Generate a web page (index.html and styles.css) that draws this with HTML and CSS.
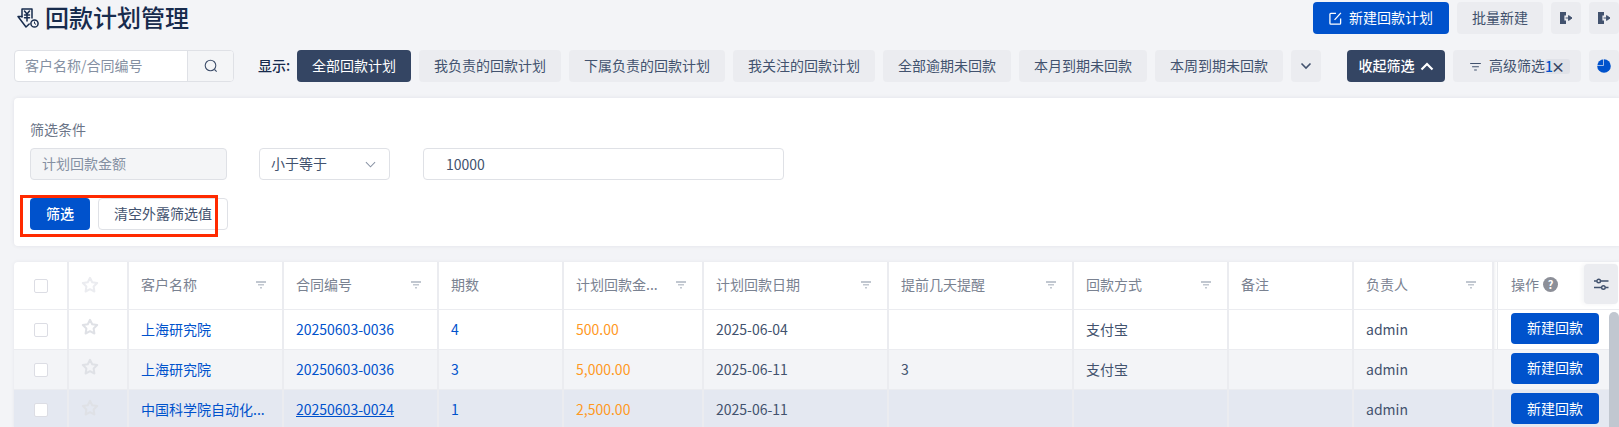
FILE: index.html
```html
<!DOCTYPE html>
<html lang="zh-CN">
<head>
<meta charset="utf-8">
<title>回款计划管理</title>
<link rel="stylesheet" href="styles.css">
</head>
<body>
<div class="page">
  <header class="top">
    <h1 class="title">
      <svg class="title-icon" viewBox="0 0 22 20" fill="none" stroke="#172b4d" stroke-width="1.5" stroke-linejoin="round" stroke-linecap="round"><path d="M5 9V1h10v9"/><path d="M5 8.500H1L9 19l3.200-3"/><path d="M7.500 3 10 6l2.500-3M7.500 7h5M7.500 9.800h5M10 6v7"/><circle cx="17.500" cy="15.500" r="3.600"/><path d="M17.500 14v1.500l1.200.7" stroke-width="1"/></svg>
      <span>回款计划管理</span>
    </h1>
    <div class="top-actions">
      <button class="btn btn-primary btn-new">
        <svg class="ico-edit" viewBox="0 0 14 14" fill="none" stroke="#fff" stroke-width="1.400"><path d="M7.500 1.500H2a1 1 0 0 0-1 1V12a1 1 0 0 0 1 1h9.500a1 1 0 0 0 1-1V7"/><path d="M6 8.500 12.800 1"/></svg>
        新建回款计划
      </button>
      <button class="btn btn-soft">批量新建</button>
      <button class="btn btn-soft btn-icon"><svg class="ico" viewBox="0 0 14 14"><path d="M1 1h6v3.600H5.400v4.800H7V13H1z" fill="#42526e"/><path d="M6.600 7h3V4.600L13 7l-3.400 2.400V7" fill="#42526e" stroke="#42526e"/></svg></button>
      <button class="btn btn-soft btn-icon"><svg class="ico" viewBox="0 0 14 14"><path d="M1 1h6v3.600H5.400v4.800H7V13H1z" fill="#42526e"/><path d="M6.600 7h3V4.600L13 7l-3.400 2.400V7" fill="#42526e" stroke="#42526e"/></svg></button>
    </div>
  </header>

  <div class="toolbar">
    <div class="search">
      <span class="search-text">客户名称/合同编号</span>
      <span class="search-btn"><svg class="ico-search" viewBox="0 0 14 14" fill="none" stroke="#42526e" stroke-width="1.100"><circle cx="6.500" cy="6.500" r="5.300"/><path d="m10.500 10.500 2.200 2.200"/></svg></span>
    </div>
    <span class="show-label">显示:</span>
    <div class="tabs">
      <button class="btn btn-dark">全部回款计划</button>
      <button class="btn btn-soft">我负责的回款计划</button>
      <button class="btn btn-soft">下属负责的回款计划</button>
      <button class="btn btn-soft">我关注的回款计划</button>
      <button class="btn btn-soft">全部逾期未回款</button>
      <button class="btn btn-soft">本月到期未回款</button>
      <button class="btn btn-soft">本周到期未回款</button>
      <button class="btn btn-soft btn-icon"><svg class="ico-chev" viewBox="0 0 12 8" fill="none" stroke="#42526e" stroke-width="1.600"><path d="m1.500 1.500 4.500 4.500 4.500-4.500"/></svg></button>
    </div>
    <div class="tool-right">
      <button class="btn btn-dark btn-collapse">收起筛选<svg class="ico-up" viewBox="0 0 14 9" fill="none" stroke="#fff" stroke-width="2.200"><path d="m1.500 7.500 5.500-5.500 5.500 5.500"/></svg></button>
      <button class="btn btn-soft btn-adv">
        <svg class="ico-filter" viewBox="0 0 12 9" fill="#42526e"><path d="M0 0h12v1.200H0zM2.200 3.600h7.600v1.200H2.200zM4.500 7.200h3v1.200h-3z"/></svg>
        <span>高级筛选</span><span class="badge"><b>1</b><em>×</em></span>
      </button>
      <button class="btn btn-soft btn-icon"><svg class="ico-pie" viewBox="0 0 14 14"><circle cx="7" cy="7" r="6.800" fill="#0052cc"/><path d="M6.500 0v6.500H0" fill="none" stroke="#ebecf0" stroke-width=".7"/></svg></button>
    </div>
  </div>

  <section class="filter-card">
    <div class="filter-label">筛选条件</div>
    <div class="filter-fields">
      <div class="field field-disabled">计划回款金额</div>
      <div class="field field-select">小于等于<svg class="ico-sel" viewBox="0 0 12 7" fill="none" stroke="#8993a4" stroke-width="1.100"><path d="m1 1 5 5 5-5"/></svg></div>
      <div class="field field-value">10000</div>
    </div>
    <div class="filter-actions">
      <button class="btn btn-primary btn-filter">筛选</button>
      <button class="btn btn-outline">清空外露筛选值</button>
      <div class="annotation"></div>
    </div>
  </section>

  <section class="table-wrap">
    <table class="grid">
      <colgroup>
        <col class="c53"><col class="c60"><col class="c155"><col class="c155"><col class="c125"><col class="c140"><col class="c185"><col class="c185"><col class="c155"><col class="c125"><col class="c140"><col class="c127">
      </colgroup>
      <thead>
        <tr>
          <th class="ctr"><span class="check"></span></th>
          <th class="ctr star-cell"><svg class="star star-head" viewBox="0 0 18 17"><path d="m9 1.800 2.200 4.500 5 .7-3.600 3.500.8 5L9 13.200l-4.400 2.300.8-5L1.800 7l5-.7z"/></svg></th>
          <th><div class="th"><span>客户名称</span><i class="fi"></i></div></th>
          <th><div class="th"><span>合同编号</span><i class="fi"></i></div></th>
          <th><div class="th"><span>期数</span></div></th>
          <th><div class="th"><span>计划回款金...</span><i class="fi"></i></div></th>
          <th><div class="th"><span>计划回款日期</span><i class="fi"></i></div></th>
          <th><div class="th"><span>提前几天提醒</span><i class="fi"></i></div></th>
          <th><div class="th"><span>回款方式</span><i class="fi"></i></div></th>
          <th><div class="th"><span>备注</span></div></th>
          <th><div class="th"><span>负责人</span><i class="fi"></i></div></th>
          <th class="op"><div class="op-head">操作<span class="help">?</span></div></th>
        </tr>
      </thead>
      <tbody>
        <tr>
          <td class="ctr"><span class="check"></span></td>
          <td class="ctr star-cell"><svg class="star" viewBox="0 0 18 17"><path d="m9 1.800 2.200 4.500 5 .7-3.600 3.500.8 5L9 13.200l-4.400 2.300.8-5L1.800 7l5-.7z"/></svg></td>
          <td class="link">上海研究院</td>
          <td class="link">20250603-0036</td>
          <td class="link">4</td>
          <td class="money">500.00</td>
          <td>2025-06-04</td>
          <td></td>
          <td>支付宝</td>
          <td></td>
          <td>admin</td>
          <td class="op"><button class="btn btn-primary btn-row">新建回款</button></td>
        </tr>
        <tr class="alt">
          <td class="ctr"><span class="check"></span></td>
          <td class="ctr star-cell"><svg class="star" viewBox="0 0 18 17"><path d="m9 1.800 2.200 4.500 5 .7-3.600 3.500.8 5L9 13.200l-4.400 2.300.8-5L1.800 7l5-.7z"/></svg></td>
          <td class="link">上海研究院</td>
          <td class="link">20250603-0036</td>
          <td class="link">3</td>
          <td class="money">5,000.00</td>
          <td>2025-06-11</td>
          <td>3</td>
          <td>支付宝</td>
          <td></td>
          <td>admin</td>
          <td class="op"><button class="btn btn-primary btn-row">新建回款</button></td>
        </tr>
        <tr class="hover">
          <td class="ctr"><span class="check"></span></td>
          <td class="ctr star-cell"><svg class="star" viewBox="0 0 18 17"><path d="m9 1.800 2.200 4.500 5 .7-3.600 3.500.8 5L9 13.200l-4.400 2.300.8-5L1.800 7l5-.7z"/></svg></td>
          <td class="link">中国科学院自动化...</td>
          <td class="link under">20250603-0024</td>
          <td class="link">1</td>
          <td class="money">2,500.00</td>
          <td>2025-06-11</td>
          <td></td>
          <td></td>
          <td></td>
          <td>admin</td>
          <td class="op"><button class="btn btn-primary btn-row">新建回款</button></td>
        </tr>
      </tbody>
    </table>
    <button class="btn btn-soft btn-settings"><svg class="ico-set" viewBox="0 0 16 13" fill="none" stroke="#42526e" stroke-width="1.400"><path d="M1 3h2.800M7.600 3h7.900M1 9.500h7.500M12.300 9.500h3.200"/><circle cx="5.700" cy="3" r="1.800"/><circle cx="10.400" cy="9.500" r="1.800"/></svg></button>
    <div class="scrollbar"></div>
  </section>
</div>
</body>
</html>
```
FILE: styles.css
```css
* { box-sizing: border-box; }
html, body { margin: 0; height: 427px; overflow: hidden; background: #f3f4f7; }
body { font: 14px/20px "Noto Sans CJK SC", "Noto Sans", sans-serif; color: #42526e; }
.page { width: 1620px; padding: 2px 0 0 14px; }

.btn { display: inline-flex; align-items: center; justify-content: center; height: 32px; padding: 0 15px 2px; border: 0; border-radius: 4px; font: inherit; white-space: nowrap; }
.btn-primary { background: #0052cc; color: #fff; }
.btn-soft { background: #ebecf0; color: #42526e; }
.btn-dark { background: #344563; color: #fff; }
.btn-outline { background: #fff; border: 1px solid #dfe1e6; color: #42526e; width: 130px; padding: 0 0 2px; }
.btn-icon { width: 30px; padding: 0; }

.top { display: flex; justify-content: space-between; align-items: flex-start; height: 32px; }
.title { display: flex; align-items: center; gap: 6px; margin: -1px 0 0 3px; height: 32px; font-size: 24px; font-weight: 500; line-height: 32px; color: #172b4d; }
.title-icon { width: 22px; height: 20px; margin-top: 2px; }
.top-actions { display: flex; gap: 8px; margin-right: 1px; }
.btn-new { width: 136px; padding: 0 0 2px; gap: 7px; }
.ico-edit { width: 13px; height: 13px; margin-top: 2px; }
.ico { width: 14px; height: 14px; }

.toolbar { display: flex; align-items: center; height: 32px; margin-top: 16px; }
.search { display: flex; width: 220px; height: 32px; border: 1px solid #dfe1e6; border-radius: 4px; background: #fff; overflow: hidden; }
.search-text { flex: 1; padding-left: 10px; line-height: 28px; color: #8590a2; }
.search-btn { display: flex; align-items: center; justify-content: center; width: 46px; border-left: 1px solid #dfe1e6; background: #f4f5f7; }
.ico-search { width: 14px; height: 14px; }
.show-label { margin-left: 24px; margin-top: -2px; width: 39px; color: #172b4d; font-weight: 500; }
.tabs { display: flex; gap: 8px; }
.ico-chev { width: 12px; height: 8px; }
.tool-right { display: flex; gap: 8px; margin-left: 26px; }
.btn-collapse { width: 98px; padding: 0 0 2px; gap: 5px; font-weight: 500; }
.ico-up { width: 14px; height: 9px; margin-top: 2px; }
.btn-adv { width: 128px; padding: 0 0 2px 17px; justify-content: flex-start; }
.ico-filter { width: 11px; height: 8px; margin: 3px 8px 0 0; }
.badge { display: inline-flex; align-items: center; height: 15px; margin-top: 2px; padding-right: 5px; border-radius: 3px; background: #e0e2e8; }
.badge b { color: #0052cc; font-weight: 500; }
.badge em { margin-left: -2px; font-style: normal; font-weight: 700; color: #344563; }
.ico-pie { width: 14px; height: 14px; }

.filter-card { height: 148px; margin-top: 16px; padding: 21px 0 0 16px; background: #fff; border-radius: 4px 0 0 4px; box-shadow: 0 0 4px rgba(9, 30, 66, .08); }
.filter-label { height: 20px; color: #6b7588; }
.filter-fields { display: flex; gap: 32px; margin-top: 9px; }
.field { display: flex; align-items: center; height: 32px; padding-bottom: 3px; border: 1px solid #dfe1e6; border-radius: 4px; }
.field-disabled { width: 197px; padding-left: 11px; background: #f4f5f7; color: #8590a2; }
.field-select { width: 131px; padding-left: 11px; padding-right: 13px; justify-content: space-between; }
.ico-sel { width: 11px; height: 7px; margin-top: 3px; }
.field-value { width: 361px; margin-left: 1px; padding-left: 22px; padding-bottom: 0; }
.filter-actions { position: relative; display: flex; gap: 8px; margin-top: 18px; }
.btn-filter { width: 60px; padding: 0 0 2px; font-weight: 500; }
.annotation { position: absolute; left: -10px; top: -3px; width: 198px; height: 42px; border: 3px solid #ff2a00; pointer-events: none; }

.table-wrap { position: relative; margin-top: 16px; background: #fff; border-radius: 4px 0 0 0; box-shadow: 0 0 4px rgba(9, 30, 66, .06); }
.grid { width: 1605px; table-layout: fixed; border-collapse: separate; border-spacing: 0; }
.c53 { width: 53px; } .c60 { width: 60px; } .c125 { width: 125px; } .c127 { width: 127px; } .c140 { width: 140px; } .c155 { width: 155px; } .c185 { width: 185px; }
th, td { padding: 0 13px 2px 12px; border-left: 2px solid #ebecf0; border-bottom: 1px solid #ebecf0; text-align: left; font-weight: 400; white-space: nowrap; overflow: hidden; }
th:first-child, td:first-child { border-left: 0; }
th { height: 48px; padding-bottom: 4px; color: #7a8291; }
td { height: 40px; }
.ctr { padding: 0; text-align: center; }
.star-cell { padding: 0 16px 0 0; }
.th { display: flex; align-items: center; justify-content: space-between; padding-right: 3px; }
.fi { display: block; width: 10px; height: 8px; margin-top: 2px; background: linear-gradient(#c1c7d0, #c1c7d0) 0 0/10px 2px no-repeat, linear-gradient(#c1c7d0, #c1c7d0) 2px 3px/6px 1.500px no-repeat, linear-gradient(#c1c7d0, #c1c7d0) 4px 6px/2px 1.500px no-repeat; }
.check { display: inline-block; width: 14px; height: 14px; margin-top: -4px; vertical-align: middle; border: 1px solid #dcdde4; border-radius: 2px; background: #fff; }
.star { display: inline-block; width: 18px; height: 17px; vertical-align: middle; margin-top: -10px; fill: none; stroke: #dfe1e6; stroke-width: 2; stroke-linejoin: round; }
.star-head { stroke: #ebecf0; margin-top: -7px; }
.link { color: #0052cc; }
.under { text-decoration: underline; }
.money { color: #ff991f; }
.alt td { background: #f3f4f7; }
.hover td { background: #e4e8f1; border-bottom: 0; }
.op { padding: 0 0 0 17px; background-image: linear-gradient(90deg, rgba(9, 30, 66, .05), rgba(9, 30, 66, 0) 3px, rgba(9, 30, 66, .09) 3px, rgba(9, 30, 66, .09) 4px, rgba(9, 30, 66, 0) 4px); }
th.op { padding-bottom: 4px; }
.op-head { display: flex; align-items: center; gap: 4px; }
.help { display: flex; align-items: center; justify-content: center; width: 15px; height: 15px; margin-top: 2px; border-radius: 50%; background: #8c8f98; color: #fff; font-size: 11px; font-weight: 700; line-height: 15px; }
.btn-row { width: 88px; height: 31px; padding: 0 0 2px; margin-top: -3px; display: flex; }
.btn-settings { position: absolute; right: 2px; top: 2px; width: 34px; height: 40px; padding: 0; box-shadow: -2px 0 4px rgba(9, 30, 66, .05); }
.ico-set { width: 16px; height: 13px; }
.scrollbar { position: absolute; right: 1px; top: 50px; width: 10px; height: 130px; border-radius: 5px; background: #c1c7d0; }
```
